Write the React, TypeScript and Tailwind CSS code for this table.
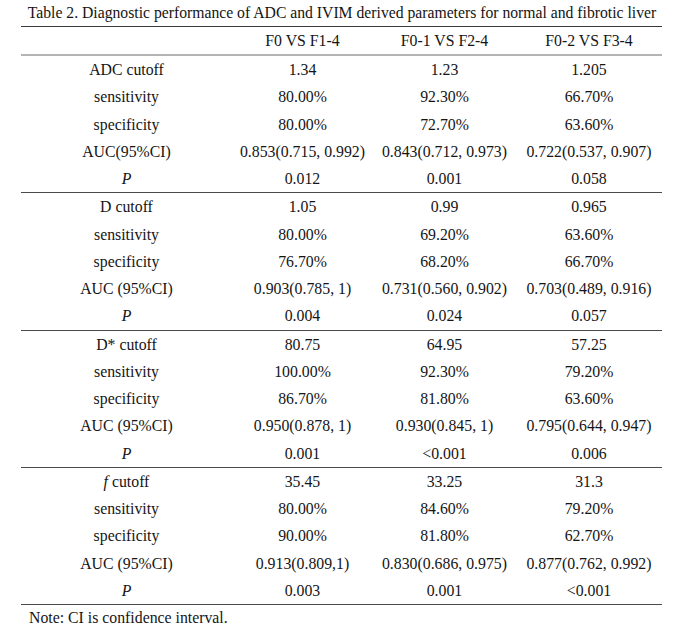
const sections = [
  {
    rows: [
      ["ADC cutoff", "1.34", "1.23", "1.205"],
      ["sensitivity", "80.00%", "92.30%", "66.70%"],
      ["specificity", "80.00%", "72.70%", "63.60%"],
      ["AUC(95%CI)", "0.853(0.715, 0.992)", "0.843(0.712, 0.973)", "0.722(0.537, 0.907)"],
      ["P", "0.012", "0.001", "0.058"],
    ],
  },
  {
    rows: [
      ["D cutoff", "1.05", "0.99", "0.965"],
      ["sensitivity", "80.00%", "69.20%", "63.60%"],
      ["specificity", "76.70%", "68.20%", "66.70%"],
      ["AUC (95%CI)", "0.903(0.785, 1)", "0.731(0.560, 0.902)", "0.703(0.489, 0.916)"],
      ["P", "0.004", "0.024", "0.057"],
    ],
  },
  {
    rows: [
      ["D* cutoff", "80.75", "64.95", "57.25"],
      ["sensitivity", "100.00%", "92.30%", "79.20%"],
      ["specificity", "86.70%", "81.80%", "63.60%"],
      ["AUC (95%CI)", "0.950(0.878, 1)", "0.930(0.845, 1)", "0.795(0.644, 0.947)"],
      ["P", "0.001", "<0.001", "0.006"],
    ],
  },
  {
    rows: [
      ["f cutoff", "35.45", "33.25", "31.3"],
      ["sensitivity", "80.00%", "84.60%", "79.20%"],
      ["specificity", "90.00%", "81.80%", "62.70%"],
      ["AUC (95%CI)", "0.913(0.809,1)", "0.830(0.686, 0.975)", "0.877(0.762, 0.992)"],
      ["P", "0.003", "0.001", "<0.001"],
    ],
  },
];

const gridCols = "grid grid-cols-[211px_141px_143px_146px]";

function Label({ text }: { text: string }) {
  if (text === "P") {
    return <span className="italic">P</span>;
  }
  if (text === "f cutoff") {
    return (
      <span>
        <span className="italic">f</span> cutoff
      </span>
    );
  }
  return <span>{text}</span>;
}

export default function App() {
  return (
    <div className="h-[631px] w-[684px] overflow-hidden bg-white font-['Liberation_Serif',serif] text-[15.8px] text-[#151515]">
      <div className="h-[26px] text-center text-[15.7px] leading-[26px]">
        Table 2. Diagnostic performance of ADC and IVIM derived parameters for normal and fibrotic liver
      </div>

      <div className="ml-[21px] w-[641px]">
        <div className="h-px bg-[#3a3a3a]" />
        <div className={`${gridCols} h-[29px] border-b-2 border-[#b4b4b4] text-center leading-[27px]`}>
          <div />
          <div>F0 VS F1-4</div>
          <div>F0-1 VS F2-4</div>
          <div>F0-2 VS F3-4</div>
        </div>

        {sections.map((section, i) => (
          <div key={i} className="border-b border-[#4a4a4a]">
            {section.rows.map((row) => (
              <div
                key={row[0]}
                className={`${gridCols} h-[27.25px] text-center leading-[27.25px]`}
              >
                <div>
                  <Label text={row[0]} />
                </div>
                <div>{row[1]}</div>
                <div>{row[2]}</div>
                <div>{row[3]}</div>
              </div>
            ))}
          </div>
        ))}
      </div>

      <div className="pl-[29px] leading-[26px]">Note: CI is confidence interval.</div>
    </div>
  );
}
